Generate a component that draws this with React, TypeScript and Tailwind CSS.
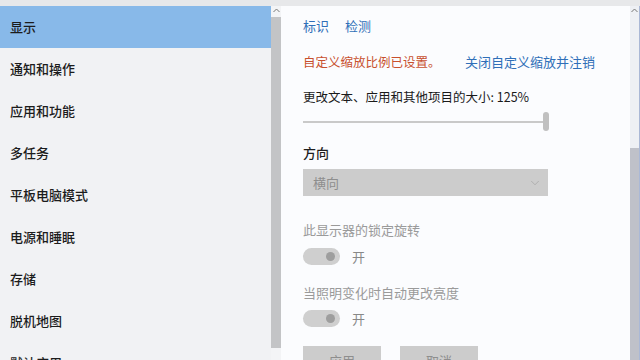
import React from 'react'
import { ChevronDown } from 'lucide-react'

const navItems = ['显示', '通知和操作', '应用和功能', '多任务', '平板电脑模式', '电源和睡眠', '存储', '脱机地图', '默认应用']

function Toggle() {
  return (
    <div className="mt-[7px] flex h-[17px] shrink-0 items-center">
      <div className="flex h-[17px] w-[37px] items-center justify-end rounded-full bg-[#cfcfcf] pr-[5px]">
        <div className="h-[9px] w-[9px] rounded-full bg-[#9e9e9e]" />
      </div>
      <span className="ml-[12px] text-[13px] text-[#888]">开</span>
    </div>
  )
}

function ScrollUp() {
  return (
    <svg width="7" height="5" viewBox="0 0 7 5" className="mx-auto mt-[2px]">
      <path d="M0.5 4 L3.5 1 L6.5 4" fill="none" stroke="#777" strokeWidth="1" />
    </svg>
  )
}

export default function App() {
  return (
    <div
      className="flex h-[360px] w-[640px] flex-col overflow-hidden bg-[#fbfcfe]"
      style={{ fontFamily: '"Noto Sans CJK SC", "Noto Sans", sans-serif' }}
    >
      <div className="h-[6px] shrink-0 bg-[#e7e8ea]" />
      <div className="flex min-h-0 flex-1">
        {/* sidebar */}
        <div className="w-[271px] shrink-0 bg-[#f1f2f4]">
          {navItems.map((item, idx) => (
            <div
              key={idx}
              className={
                'flex h-[42px] items-center pl-[10px] text-[13px] font-medium text-[#1c1c1c] ' +
                (idx === 0 ? 'bg-[#88b9e9]' : '')
              }
            >
              {item}
            </div>
          ))}
        </div>
        <div className="flex w-[10px] shrink-0 flex-col bg-[#f3f4f6]">
          <div className="h-[11px]">
            <ScrollUp />
          </div>
          <div className="h-[331px] bg-[#c3c4c6]" />
        </div>

        {/* main */}
        <div className="flex min-w-0 flex-1 flex-col overflow-hidden pl-[22px] pt-[10px] text-[13px] [&>*]:shrink-0">
          <div className="flex h-[20px] items-center gap-[16px] text-[#2f6fb8]">
            <span>标识</span>
            <span>检测</span>
          </div>
          <div className="mt-[16px] flex h-[20px] items-center">
            <span className="w-[162px] text-[12.5px] text-[#c8502e]">自定义缩放比例已设置。</span>
            <span className="text-[#2f6fb8]">关闭自定义缩放并注销</span>
          </div>
          <div className="mt-[15px] flex h-[20px] items-center text-[12.5px] text-[#1a1a1a]">
            更改文本、应用和其他项目的大小: 125%
          </div>
          <div className="mt-[5px] flex h-[19px] w-[246px] items-center">
            <div className="h-[2px] flex-1 bg-[#c9c9c9]" />
            <div className="h-[19px] w-[6px] rounded-[3px] bg-[#c0c0c0]" />
          </div>
          <div className="mt-[12px] flex h-[20px] items-center font-medium text-[#1e1e1e]">方向</div>
          <div className="mt-[6px] flex h-[27px] w-[245px] items-center justify-between bg-[#cccccc] pl-[10px] pr-[6px] text-[#8e8e8e]">
            <span>横向</span>
            <ChevronDown size={14} strokeWidth={1} color="#9a9a9a" />
          </div>
          <div className="mt-[24px] flex h-[20px] items-center text-[#9a9a9a]">此显示器的锁定旋转</div>
          <div className="mt-[1px]">
            <Toggle />
          </div>
          <div className="mt-[18px] flex h-[20px] items-center text-[#9a9a9a]">当照明变化时自动更改亮度</div>
          <Toggle />
          <div className="mt-[19px] flex gap-[19px]">
            <div className="flex h-[30px] w-[78px] items-center justify-center bg-[#cccccc] text-[#8e8e8e]">应用</div>
            <div className="flex h-[30px] w-[78px] items-center justify-center bg-[#cccccc] text-[#8e8e8e]">取消</div>
          </div>
        </div>

        {/* right scrollbar */}
        <div className="flex w-[9px] shrink-0 flex-col bg-[#eef0f4]">
          <div className="h-[8px]">
            <ScrollUp />
          </div>
          <div className="h-[134px]" />
          <div className="flex-1 bg-[#bfc1c9]" />
        </div>
        <div className="w-[1px] shrink-0 bg-[#aab8d6]" />
      </div>
    </div>
  )
}
